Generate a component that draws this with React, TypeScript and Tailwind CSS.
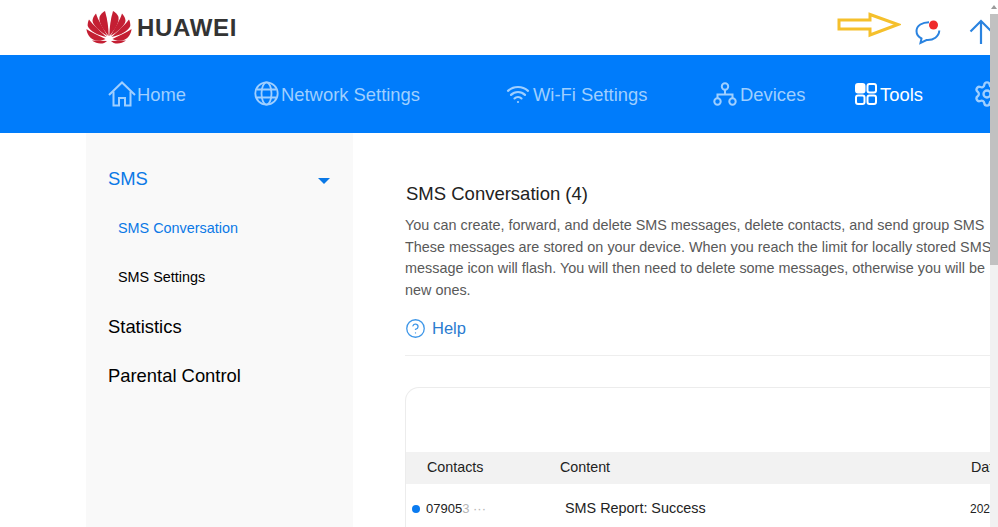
import { Wifi, Settings, CircleHelp } from 'lucide-react'

function HuaweiLogo() {
    // petals fanned out around the bottom centre, mirrored left and right
    const petals = [
        'M0.5 18 C5 21 13 25 19.5 28 C13 31.5 6 29.5 3 25 C1.5 23 0.5 20 0.5 18 Z',
        'M45.5 18 C41 21 33 25 26.5 28 C33 31.5 40 29.5 43 25 C44.5 23 45.5 20 45.5 18 Z',
        'M3 8.5 C7 14 14 20 20.5 26 C12 24.5 3.5 20 1.7 15 C1.5 13 2 10.5 3 8.5 Z',
        'M43 8.5 C39 14 32 20 25.5 26 C34 24.5 42.5 20 44.3 15 C44.5 13 44 10.5 43 8.5 Z',
        'M10 2.5 C12 9 17 17 21.5 25 C14 20.5 7.5 15 6.5 10 C6.5 7.5 8 4.5 10 2.5 Z',
        'M36 2.5 C34 9 29 17 24.5 25 C32 20.5 38.5 15 39.5 10 C39.5 7.5 38 4.5 36 2.5 Z',
        'M19 0 C21.5 8 22.5 17 22.7 25 C17.5 19 12.5 12 13.5 6 C14 3.5 17 1 19 0 Z',
        'M27 0 C24.5 8 23.5 17 23.3 25 C28.5 19 33.5 12 32.5 6 C32 3.5 29 1 27 0 Z',
        'M6 29.5 L21 30 C18 33.5 11 33.5 6 29.5 Z',
        'M40 29.5 L25 30 C28 33.5 35 33.5 40 29.5 Z',
    ]
    return (
        <svg width="46" height="34" viewBox="0 0 46 34" className="shrink-0">
            {petals.map((d) => (
                <path key={d} d={d} fill="#c41f33" />
            ))}
        </svg>
    )
}

function HomeIcon() {
    return (
        <svg width="28" height="26" viewBox="0 0 28 26" fill="none" stroke="#9fcfff" strokeWidth="2" className="shrink-0">
            <path d="M1 14 L14 1.5 L27 14" />
            <path d="M5.5 10.5 V24.5 H11 V17 H17 V24.5 H22.5 V10.5" />
        </svg>
    )
}

function GlobeIcon() {
    return (
        <svg width="25" height="25" viewBox="0 0 25 25" fill="none" stroke="#9fcfff" strokeWidth="1.8" className="shrink-0">
            <circle cx="12.5" cy="12.5" r="11.2" />
            <ellipse cx="12.5" cy="12.5" rx="5" ry="11.2" />
            <path d="M2.5 8.5 H22.5 M2.5 16.5 H22.5" />
        </svg>
    )
}

function ToolsIcon() {
    return (
        <svg width="22" height="22" viewBox="0 0 22 22" fill="none" stroke="white" strokeWidth="2" className="shrink-0">
            <rect x="1" y="1" width="8.5" height="8.5" rx="2" fill="white" />
            <rect x="12.5" y="1" width="8.5" height="8.5" rx="2" />
            <rect x="1" y="12.5" width="8.5" height="8.5" rx="2" />
            <rect x="12.5" y="12.5" width="8.5" height="8.5" rx="2" />
        </svg>
    )
}

function DevicesIcon() {
    return (
        <svg width="24" height="24" viewBox="0 0 24 24" fill="none" stroke="#9fcfff" strokeWidth="2" className="shrink-0">
            <circle cx="12" cy="4.5" r="3.2" />
            <circle cx="4.5" cy="19.5" r="3.2" />
            <circle cx="19.5" cy="19.5" r="3.2" />
            <path d="M12 8 V12.5 M4.5 16 V12.5 H19.5 V16" />
        </svg>
    )
}

function ArrowNote() {
    return (
        <svg width="64" height="26" viewBox="0 0 64 26" fill="none" stroke="#f5c02c" strokeWidth="3" className="shrink-0">
            <path d="M2 8 H33 V2.5 L61 12.5 L33 23 V17 H2 Z" />
        </svg>
    )
}

function MessageIcon() {
    return (
        <svg width="26" height="26" viewBox="0 0 26 26" fill="none" className="shrink-0">
            <path d="M14 3.2 C7.5 3.2 1.5 6.5 1.5 12 C1.5 15.5 3.5 18 6.5 19.5 L5.5 24 L11.5 21 C18.5 21.5 24 17.5 24.3 11.5" stroke="#2a83e0" strokeWidth="2" />
            <circle cx="18.5" cy="6" r="4.5" fill="#ef2b2b" />
        </svg>
    )
}

function UpArrow() {
    return (
        <svg width="24" height="26" viewBox="0 0 24 26" fill="none" stroke="#2a83e0" strokeWidth="2.2" className="shrink-0">
            <path d="M12 25 V2 M1.5 12.5 L12 2 L22.5 12.5" />
        </svg>
    )
}

const navItems = [
    { label: 'Home', width: 'w-[146px]', gap: 'gap-[1px]', icon: <HomeIcon /> },
    { label: 'Network Settings', width: 'w-[252px]', gap: 'gap-[2px]', icon: <GlobeIcon /> },
    { label: 'Wi-Fi Settings', width: 'w-[207px]', gap: 'gap-[3px]', icon: <Wifi size={24} strokeWidth={2.2} color="#9fcfff" /> },
    { label: 'Devices', width: 'w-[142px]', gap: 'gap-[3px]', icon: <DevicesIcon /> },
]

export default function App() {
    return (
        <div className="relative w-[998px] h-[527px] overflow-hidden bg-white font-['Liberation_Sans',Arial,sans-serif]">
            <header className="h-[55px] flex items-center pl-[86px]">
                <div className="flex items-center gap-[5px]">
                    <HuaweiLogo />
                    <span className="text-[24px] font-bold tracking-[0.7px] text-[#333333] leading-none mt-[1px]">HUAWEI</span>
                </div>
                <div className="ml-[600px] flex items-center">
                    <div className="-mt-[6px]"><ArrowNote /></div>
                    <div className="ml-[14px] mt-[9px]"><MessageIcon /></div>
                    <div className="ml-[28px] mt-[9px]"><UpArrow /></div>
                </div>
            </header>

            <nav className="h-[78px] bg-[#007cfb] flex items-center pl-[108px] whitespace-nowrap text-[18.4px] text-[#9fcfff]">
                {navItems.map((item) => (
                    <div key={item.label} className={`flex items-center shrink-0 ${item.width} ${item.gap}`}>
                        {item.icon}
                        <span className="mt-[2px]">{item.label}</span>
                    </div>
                ))}
                <div className="flex items-center gap-[3px] w-[118px] shrink-0 text-white">
                    <ToolsIcon />
                    <span className="mt-[2px]">Tools</span>
                </div>
                <Settings size={28} strokeWidth={2} color="#9fcfff" className="shrink-0" />
            </nav>

            <div className="flex h-[394px] pl-[86px]">
                <aside className="w-[267px] shrink-0 bg-[#f9f9f9] pl-[22px] pr-[23px] pt-[33px]">
                    <div className="flex items-center justify-between h-[26px]">
                        <span className="text-[18.4px] text-[#0a78e6]">SMS</span>
                        <span className="w-0 h-0 mt-[3px] border-x-[6px] border-x-transparent border-t-[6px] border-t-[#0a78e6]" />
                    </div>
                    <div className="mt-[24px] pl-[10px] text-[14.4px] text-[#0a78e6] leading-[24px]">SMS Conversation</div>
                    <div className="mt-[25px] pl-[10px] text-[14.4px] text-black leading-[24px]">SMS Settings</div>
                    <div className="mt-[25px] text-[18.4px] text-black leading-[26px]">Statistics</div>
                    <div className="mt-[23px] text-[18.4px] text-black leading-[26px]">Parental Control</div>
                </aside>

                <main className="w-[637px] shrink-0 overflow-hidden pl-[52px] pt-[48px]">
                    <h1 className="pl-[1px] text-[18.5px] leading-[26px] text-[#222222]">SMS Conversation (4)</h1>
                    <p className="mt-[8px] text-[14.4px] leading-[21.5px] text-[#595959] whitespace-nowrap">
                        You can create, forward, and delete SMS messages, delete contacts, and send group SMS<br />
                        These messages are stored on your device. When you reach the limit for locally stored SMS<br />
                        message icon will flash. You will then need to delete some messages, otherwise you will be<br />
                        new ones.
                    </p>
                    <div className="mt-[14px] flex items-center gap-[6px] h-[26px] text-[16.5px] text-[#2a7bd0]">
                        <CircleHelp size={21} strokeWidth={1.5} color="#3f97e8" className="shrink-0" />
                        <span>Help</span>
                    </div>
                    <div className="mt-[14px] h-px bg-[#eeeeee]" />

                    <section className="mt-[31px] border border-r-0 border-[#ececec] rounded-tl-[14px] h-[160px]">
                        <div className="h-[64px]" />
                        <div className="h-[32px] bg-[#f2f2f2] flex items-center text-[14.3px] text-[#222222] whitespace-nowrap">
                            <span className="ml-[21px] w-[133px] shrink-0">Contacts</span>
                            <span className="w-[411px] shrink-0">Content</span>
                            <span>Date</span>
                        </div>
                        <div className="h-[50px] flex items-center whitespace-nowrap text-[#222222]">
                            <span className="ml-[6px] w-[8px] h-[8px] rounded-full bg-[#0a7bf0] shrink-0" />
                            <span className="ml-[6px] w-[139px] shrink-0 text-[13px]">
                                07905<span className="text-[#b5b5b5]">3 ···</span>
                            </span>
                            <span className="w-[405px] shrink-0 text-[14.4px]">SMS Report: Success</span>
                            <span className="text-[12px]">2020</span>
                        </div>
                    </section>
                </main>
            </div>

            <div className="absolute top-0 right-0 bottom-0 w-[8px] bg-[#f1f1f1] flex flex-col">
                <div className="h-[14px] flex items-center justify-center bg-white">
                    <span className="w-0 h-0 border-x-[3px] border-x-transparent border-b-[4px] border-b-[#9a9a9a]" />
                </div>
                <div className="h-[251px] bg-[#c1c1c1]" />
            </div>
        </div>
    )
}
